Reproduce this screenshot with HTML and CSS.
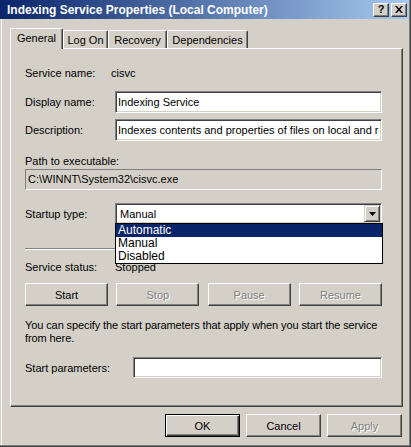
FILE: index.html
```html
<!DOCTYPE html>
<html lang="en">
<head>
    <meta charset="UTF-8">
    <meta name="viewport" content="width=device-width, initial-scale=1.0">
    <title>Indexing Service Properties (Local Computer)</title>
    <link rel="stylesheet" href="styles.css">
</head>
<body>
    <div class="window">
        <div class="titlebar">
            <span class="title">Indexing Service Properties (Local Computer)</span>
            <button class="cap-btn help">?</button>
            <button class="cap-btn close">
                <svg width="8" height="7" viewBox="0 0 8 7">
                    <path d="M0 0h2l2 2.5L6 0h2L5 3.5 8 7H6L4 4.5 2 7H0l3-3.5z" fill="#000"/>
                </svg>
            </button>
        </div>

        <div class="tabs">
            <div class="tab tab-general active">General</div>
            <div class="tab tab-logon">Log On</div>
            <div class="tab tab-recovery">Recovery</div>
            <div class="tab tab-deps">Dependencies</div>
        </div>

        <div class="panel">
            <div class="row row-name">
                <span class="label">Service name:</span>
                <span class="value">cisvc</span>
            </div>

            <div class="row row-field">
                <label class="label" for="displayName">Display name:</label>
                <input class="edit" id="displayName" type="text" value="Indexing Service">
            </div>

            <div class="row row-desc">
                <label class="label" for="description">Description:</label>
                <input class="edit" id="description" type="text" value="Indexes contents and properties of files on local and remote computers; provides rapid access to files through flexible querying language.">
            </div>

            <div class="path-label">Path to executable:</div>
            <div class="path-box">C:\WINNT\System32\cisvc.exe</div>

            <div class="row row-startup">
                <span class="label">Startup type:</span>
                <div class="combo">
                    <span class="combo-text">Manual</span>
                    <span class="combo-btn">
                        <svg width="7" height="4" viewBox="0 0 7 4">
                            <path d="M0 0h7L3.5 4z" fill="#000"/>
                        </svg>
                    </span>
                    <ul class="dropdown">
                        <li class="selected">Automatic</li>
                        <li>Manual</li>
                        <li>Disabled</li>
                    </ul>
                </div>
            </div>

            <div class="separator"></div>

            <div class="row row-status">
                <span class="label">Service status:</span>
                <span class="value status">Stopped</span>
            </div>

            <div class="service-buttons">
                <button class="btn">Start</button>
                <button class="btn" disabled>Stop</button>
                <button class="btn" disabled>Pause</button>
                <button class="btn" disabled>Resume</button>
            </div>

            <p class="hint">You can specify the start parameters that apply when you start the service from here.</p>

            <div class="row row-params">
                <label class="label label-wide" for="params">Start parameters:</label>
                <input class="edit edit-params" id="params" type="text" value="">
            </div>
        </div>

        <div class="footer">
            <button class="btn default">OK</button>
            <button class="btn">Cancel</button>
            <button class="btn" disabled>Apply</button>
        </div>
    </div>
</body>
</html>
```

FILE: styles.css
```css
body {
    margin: 0;
    background-color: #d4d0c8;
    font-family: "Liberation Sans", Arial, sans-serif;
    font-size: 11px;
    color: #000;
    overflow: hidden;
}
.window {
    width: 411px;
    height: 447px;
    box-sizing: border-box;
    padding-right: 2px;
    background-color: #d4d0c8;
    box-shadow: inset -1px -1px #404040, inset -2px -2px #808080, inset 1px 0 #d4d0c8, inset 2px 0 #fff;
}

/* title bar */
.titlebar {
    display: flex;
    align-items: center;
    height: 19px;
    padding: 0 2px 0 7px;
    background: linear-gradient(to right, #0a246a, #a6caf0);
}
.title {
    flex: 1;
    color: #fff;
    font-weight: bold;
    font-size: 12px;
    white-space: nowrap;
}
.cap-btn {
    display: flex;
    align-items: center;
    justify-content: center;
    width: 16px;
    height: 14px;
    padding: 0;
    margin-left: 2px;
    box-sizing: border-box;
    background-color: #d4d0c8;
    border: 1px solid;
    border-color: #fff #404040 #404040 #fff;
    box-shadow: inset -1px -1px #808080;
    font-family: "Liberation Sans", Arial, sans-serif;
    font-weight: bold;
    font-size: 11px;
    line-height: 1;
    color: #000;
}

/* tabs */
.tabs {
    display: flex;
    align-items: flex-end;
    height: 20px;
    margin: 9px 0 0 10px;
}
.tab {
    display: flex;
    align-items: center;
    justify-content: center;
    height: 18px;
    box-sizing: border-box;
    border-top: 1px solid #fff;
    border-left: 1px solid #fff;
    border-right: 1px solid #404040;
    border-radius: 2px 2px 0 0;
    box-shadow: inset -1px 0 #808080;
    padding-top: 1px;
}
.tab.active {
    height: 21px;
    margin-bottom: -1px;
    position: relative;
    z-index: 1;
    background-color: #d4d0c8;
    padding-top: 0;
    padding-bottom: 2px;
}
.tab-general { width: 53px; }
.tab-logon { width: 45px; }
.tab-recovery { width: 59px; }
.tab-deps { width: 81px; }

/* property page */
.panel {
    width: 393px;
    height: 359px;
    margin-left: 10px;
    box-sizing: border-box;
    padding: 16px 20px 0 14px;
    border-top: 1px solid #fff;
    border-left: 1px solid #fff;
    border-right: 1px solid #404040;
    border-bottom: 1px solid #404040;
    box-shadow: inset -1px -1px #808080;
}
.row {
    display: flex;
    align-items: center;
}
.label {
    width: 90px;
    flex-shrink: 0;
}
.label-wide {
    width: 108px;
}
.row-name {
    height: 16px;
}
.row-name .label {
    width: 86px;
}
.row-field {
    margin-top: 10px;
}
.row-desc {
    margin-top: 6px;
}
.edit {
    box-sizing: border-box;
    width: 267px;
    height: 22px;
    padding: 0 2px;
    margin: 0;
    font: inherit;
    color: #000;
    background-color: #fff;
    border: 1px solid;
    border-color: #808080 #fff #fff #808080;
    box-shadow: inset 1px 1px #404040, inset -1px -1px #d4d0c8;
    outline: none;
}
.edit-params {
    width: 249px;
    height: 21px;
}
.path-label {
    margin-top: 13px;
    line-height: 14px;
}
.path-box {
    box-sizing: border-box;
    height: 21px;
    margin-top: 1px;
    padding-left: 2px;
    line-height: 19px;
    border: 1px solid;
    border-color: #808080 #fff #fff #808080;
}

/* startup type combo */
.row-startup {
    margin-top: 13px;
}
.combo {
    position: relative;
    display: flex;
    align-items: center;
    box-sizing: border-box;
    width: 267px;
    height: 21px;
    background-color: #fff;
    border: 1px solid;
    border-color: #808080 #fff #fff #808080;
    box-shadow: inset 1px 1px #404040, inset -1px -1px #d4d0c8;
}
.combo-text {
    flex: 1;
    padding-left: 4px;
}
.combo-btn {
    display: flex;
    align-items: center;
    justify-content: center;
    box-sizing: border-box;
    width: 16px;
    height: 17px;
    margin-right: 1px;
    background-color: #d4d0c8;
    border: 1px solid;
    border-color: #d4d0c8 #404040 #404040 #d4d0c8;
    box-shadow: inset 1px 1px #fff, inset -1px -1px #808080;
}
.dropdown {
    position: absolute;
    top: 100%;
    left: -1px;
    width: 268px;
    box-sizing: border-box;
    margin: 0;
    padding: 0;
    list-style: none;
    background-color: #fff;
    border: 1px solid #000;
    z-index: 2;
    font-size: 12px;
}
.dropdown li {
    height: 13px;
    line-height: 13px;
    padding-left: 2px;
}
.dropdown li.selected {
    background-color: #0a246a;
    color: #fff;
}

.separator {
    margin-top: 24px;
    border-top: 1px solid #808080;
    border-bottom: 1px solid #fff;
    height: 0;
}
.row-status {
    margin-top: 10px;
    height: 14px;
}

/* buttons */
.btn {
    box-sizing: border-box;
    width: 75px;
    height: 23px;
    padding: 0;
    font: inherit;
    color: #000;
    background-color: #d4d0c8;
    border: 1px solid;
    border-color: #fff #404040 #404040 #fff;
    box-shadow: inset -1px -1px #808080;
}
.btn:disabled {
    color: #808080;
    text-shadow: 1px 1px #fff;
}
.btn.default {
    border-color: #000;
    box-shadow: inset 1px 1px #fff, inset -1px -1px #404040, inset -2px -2px #808080;
}
.service-buttons {
    display: flex;
    justify-content: space-between;
    margin-top: 9px;
}
.service-buttons .btn {
    width: 83px;
}
.hint {
    margin: 13px -16px 0 0;
    line-height: 13px;
    letter-spacing: -0.1px;
}
.row-params {
    margin-top: 12px;
}

.footer {
    display: flex;
    justify-content: flex-end;
    gap: 6px;
    margin: 7px 7px 0 0;
}
```
